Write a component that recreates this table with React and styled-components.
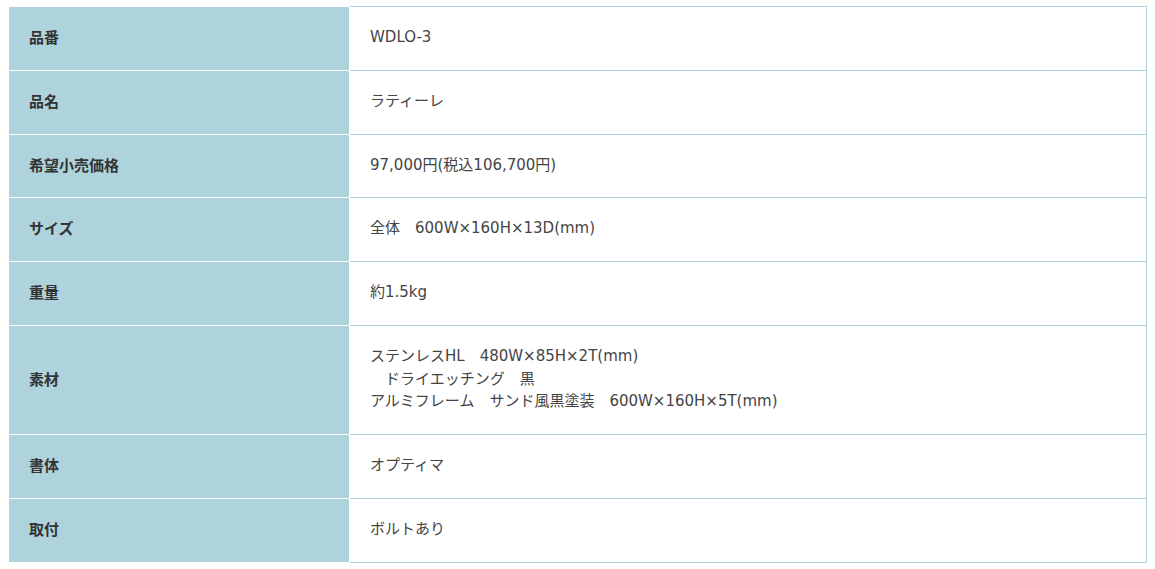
import React from "react";
import styled, { createGlobalStyle } from "styled-components";

const GlobalStyle = createGlobalStyle`
  html, body {
    margin: 0;
    padding: 0;
    background: #fff;
  }
  body {
    font-family: "Noto Sans CJK JP", "Noto Sans", sans-serif;
    color: #333;
  }
`;

const SpecTable = styled.table`
  border-collapse: collapse;
  width: 1139px;
  margin: 6px 0 0 8px;
  font-size: 15px;
  line-height: 22.75px;
  & th,
  & td {
    padding: 19px 20px 21px;
    vertical-align: middle;
    text-align: left;
  }
  & th {
    width: 300px;
    background: #afd3dc;
    border: 1px solid #fff;
    font-weight: bold;
    color: #333;
  }
  & td {
    border: 1px solid #b0d4dc;
    font-family: "DejaVu Sans", "Noto Sans CJK JP", sans-serif;
    font-weight: normal;
    color: #444;
    white-space: pre;
  }
`;

const specs = [
  { label: "品番", value: "WDLO-3" },
  { label: "品名", value: "ラティーレ" },
  { label: "希望小売価格", value: "97,000円(税込106,700円)" },
  { label: "サイズ", value: "全体　600W×160H×13D(mm)" },
  { label: "重量", value: "約1.5kg" },
  {
    label: "素材",
    value:
      "ステンレスHL　480W×85H×2T(mm)\n　ドライエッチング　黒\nアルミフレーム　サンド風黒塗装　600W×160H×5T(mm)",
  },
  { label: "書体", value: "オプティマ" },
  { label: "取付", value: "ボルトあり" },
];

const App = () => {
  const rows = specs.map((spec) => (
    <tr key={spec.label}>
      <th>{spec.label}</th>
      <td>{spec.value}</td>
    </tr>
  ));
  return (
    <>
      <GlobalStyle />
      <SpecTable>
        <tbody>{rows}</tbody>
      </SpecTable>
    </>
  );
};

export default App;
